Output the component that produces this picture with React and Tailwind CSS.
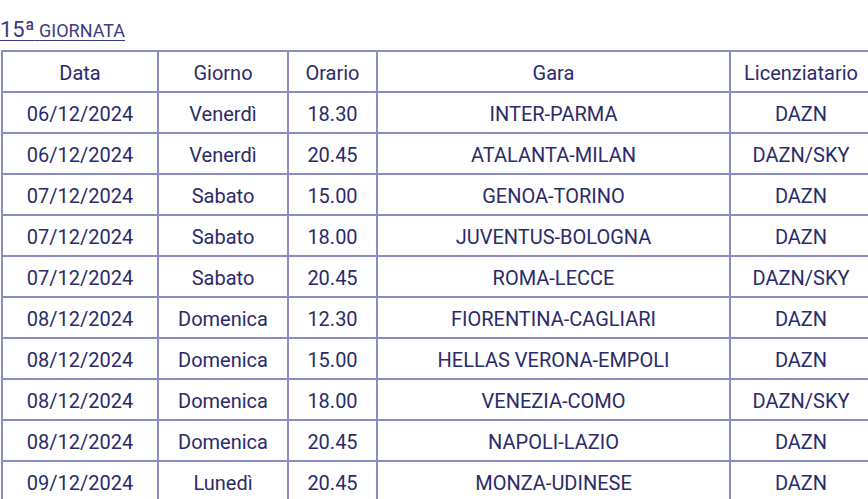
const rows = [
  ["06/12/2024", "Venerdì", "18.30", "INTER-PARMA", "DAZN"],
  ["06/12/2024", "Venerdì", "20.45", "ATALANTA-MILAN", "DAZN/SKY"],
  ["07/12/2024", "Sabato", "15.00", "GENOA-TORINO", "DAZN"],
  ["07/12/2024", "Sabato", "18.00", "JUVENTUS-BOLOGNA", "DAZN"],
  ["07/12/2024", "Sabato", "20.45", "ROMA-LECCE", "DAZN/SKY"],
  ["08/12/2024", "Domenica", "12.30", "FIORENTINA-CAGLIARI", "DAZN"],
  ["08/12/2024", "Domenica", "15.00", "HELLAS VERONA-EMPOLI", "DAZN"],
  ["08/12/2024", "Domenica", "18.00", "VENEZIA-COMO", "DAZN/SKY"],
  ["08/12/2024", "Domenica", "20.45", "NAPOLI-LAZIO", "DAZN"],
  ["09/12/2024", "Lunedì", "20.45", "MONZA-UDINESE", "DAZN"],
];

const heads = ["Data", "Giorno", "Orario", "Gara", "Licenziatario"];
const widths = ["w-[156px]", "w-[130px]", "w-[89px]", "w-[353px]", "w-[142px]"];

export default function App() {
  return (
    <div className="w-[868px] h-[499px] overflow-hidden bg-white font-['Roboto',sans-serif] text-[#2b2b6a]">
      <div className="pt-[19px] h-[50px]">
        <span className="underline underline-offset-[3px] text-[#3b3b80] leading-none">
          <span className="text-[22px]">15ª</span>
          <span className="text-[18px]"> GIORNATA</span>
        </span>
      </div>
      <table className="ml-[1px] w-[870px] table-fixed border-collapse">
        <thead>
          <tr className="h-[41px]">
            {heads.map((h, i) => (
              <th
                key={h}
                className={`${widths[i]} border-2 border-[#8b8bc6] text-[20px] font-normal text-center p-0 pt-[2px]`}
              >
                {h}
              </th>
            ))}
          </tr>
        </thead>
        <tbody>
          {rows.map((r, ri) => (
            <tr key={ri} className="h-[41px]">
              {r.map((c, ci) => (
                <td
                  key={ci}
                  className="border-2 border-[#8b8bc6] text-[20px] text-center p-0 pt-[2px]"
                >
                  {c}
                </td>
              ))}
            </tr>
          ))}
        </tbody>
      </table>
    </div>
  );
}
